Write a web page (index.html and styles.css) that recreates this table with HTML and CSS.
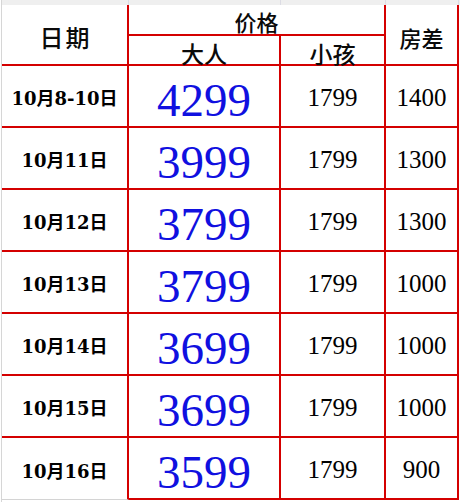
FILE: index.html
```html
<!DOCTYPE html>
<html lang="zh">
<head>
<meta charset="utf-8">
<link rel="stylesheet" href="styles.css">
<title>价格表</title>
</head>
<body>
<div class="sheet">
  <div class="band">
    <span class="band-cell"></span>
    <span class="band-cell"></span>
    <span class="band-cell"></span>
    <span class="band-cell"></span>
  </div>
  <div class="grid">
    <div class="cell head date-head">日期</div>
    <div class="cell head price-head">价格</div>
    <div class="cell head room-head">房差</div>
    <div class="cell head sub adult-head">大人</div>
    <div class="cell head sub child-head">小孩</div>

    <div class="cell date">10月8-10日</div>
    <div class="cell price">4299</div>
    <div class="cell num">1799</div>
    <div class="cell num last">1400</div>

    <div class="cell date">10月11日</div>
    <div class="cell price">3999</div>
    <div class="cell num">1799</div>
    <div class="cell num last">1300</div>

    <div class="cell date">10月12日</div>
    <div class="cell price">3799</div>
    <div class="cell num">1799</div>
    <div class="cell num last">1300</div>

    <div class="cell date">10月13日</div>
    <div class="cell price">3799</div>
    <div class="cell num">1799</div>
    <div class="cell num last">1000</div>

    <div class="cell date">10月14日</div>
    <div class="cell price">3699</div>
    <div class="cell num">1799</div>
    <div class="cell num last">1000</div>

    <div class="cell date">10月15日</div>
    <div class="cell price">3699</div>
    <div class="cell num">1799</div>
    <div class="cell num last">1000</div>

    <div class="cell date final">10月16日</div>
    <div class="cell price">3599</div>
    <div class="cell num">1799</div>
    <div class="cell num last">900</div>
  </div>
</div>
</body>
</html>
```

FILE: styles.css
```css
html, body {
  margin: 0;
  padding: 0;
  background: #ffffff;
}

body {
  width: 460px;
  height: 502px;
  overflow: hidden;
  font-family: "Liberation Serif", "Noto Sans CJK SC", serif;
  color: #111111;
}

.sheet {
  margin-left: 1px;
  border-left: 1px solid #d6d6d6;
  width: 458px;
  height: 502px;
}

.band {
  height: 5px;
  background: #efefef;
  display: grid;
  grid-template-columns: 127px 152px 105px 73px;
}

.band-cell {
  border-right: 1px solid #dcdce4;
  box-sizing: border-box;
}

.grid {
  display: grid;
  grid-template-columns: 127px 152px 105px 73px;
  grid-template-rows: 31px 30px repeat(7, 62px);
}

.cell {
  box-sizing: border-box;
  border-right: 2px solid #d40000;
  border-bottom: 2px solid #d40000;
  display: flex;
  align-items: center;
  justify-content: center;
  padding-top: 4px;
  white-space: nowrap;
}

.head {
  font-family: "Noto Sans CJK SC", sans-serif;
  font-weight: 500;
  color: #0a0a0a;
}

.date-head {
  grid-column: 1;
  grid-row: 1 / span 2;
  font-size: 24px;
  letter-spacing: 2px;
  padding-left: 2px;
}

.price-head {
  grid-column: 2 / span 2;
  grid-row: 1;
  font-size: 22px;
  padding-top: 3px;
}

.room-head {
  grid-column: 4;
  grid-row: 1 / span 2;
  font-size: 22px;
}

.sub {
  grid-row: 2;
  font-size: 23px;
  padding-top: 6px;
}

.adult-head { grid-column: 2; }
.child-head { grid-column: 3; }

.date {
  font-family: "DejaVu Serif", "Noto Sans CJK SC", serif;
  font-weight: 700;
  font-size: 18px;
  color: #000000;
  padding-top: 2px;
}

.final {
  border-bottom: 1px solid #d4d4d4;
}

.price {
  font-family: "Liberation Serif", serif;
  font-size: 47px;
  color: #1010e0;
  padding-top: 7px;
}

.num {
  font-family: "Liberation Serif", serif;
  font-size: 25px;
  color: #000000;
  padding-top: 3px;
}
```
